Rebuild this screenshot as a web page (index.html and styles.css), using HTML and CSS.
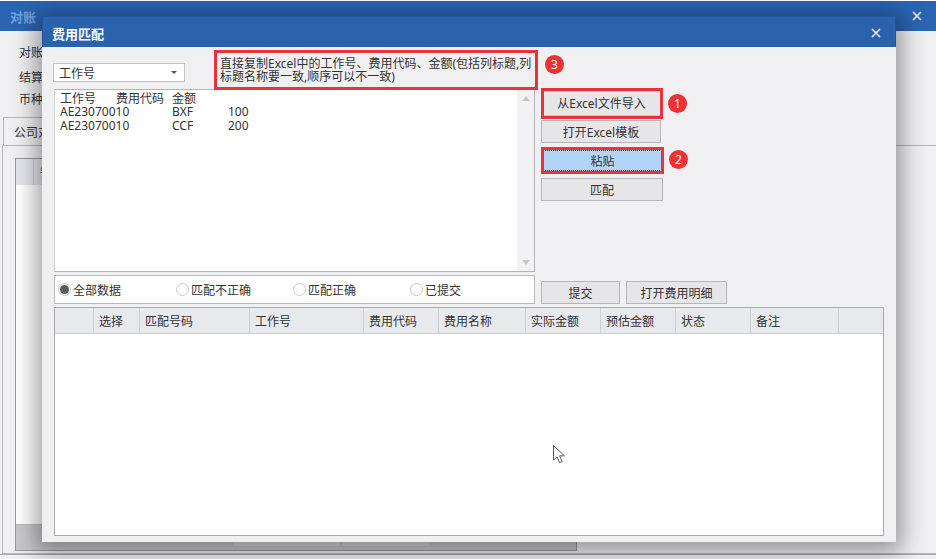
FILE: index.html
```html
<!DOCTYPE html>
<html lang="zh-CN">
<head>
<meta charset="utf-8">
<title>费用匹配</title>
<link rel="stylesheet" href="styles.css">
</head>
<body>
<div class="desk">
  <section class="outer">
    <header class="outer-title"><span>对账</span><svg class="x" viewBox="0 0 10 10"><path d="M1 1L9 9M9 1L1 9"/></svg></header>
    <div class="outer-body">
      <div class="outer-labels"><span>对账</span><span>结算</span><span>币种</span></div>
      <div class="outer-tab">公司对账</div>
      <div class="outer-panel">
        <div class="outer-grid"><div class="outer-grid-head"><i></i><i>销</i></div><div class="outer-grid-foot"><b></b><b></b></div></div>
      </div>
    </div>
  </section>

  <section class="dialog">
    <header class="dialog-title"><span>费用匹配</span><svg class="x" viewBox="0 0 10 10"><path d="M1 1L9 9M9 1L1 9"/></svg></header>
    <div class="dialog-body">
      <div class="top">
        <div class="left">
          <div class="combo"><span>工作号</span><i class="caret"></i></div>
          <div class="memo">
            <div class="memo-text">
              <span class="mh">工作号</span><span class="mh">费用代码</span><span class="mh">金额</span><span class="mh"></span>
              <span class="wide">AE23070010</span><span>BXF</span><span>100</span>
              <span class="wide">AE23070010</span><span>CCF</span><span>200</span>
            </div>
            <div class="scroll"><i class="up"></i><i class="down"></i></div>
          </div>
          <div class="radios">
            <label class="radio on"><i></i>全部数据</label>
            <label class="radio r2"><i></i>匹配不正确</label>
            <label class="radio r3"><i></i>匹配正确</label>
            <label class="radio r4"><i></i>已提交</label>
          </div>
        </div>
        <div class="right">
          <button class="btn b1">从Excel文件导入</button>
          <button class="btn b2">打开Excel模板</button>
          <button class="btn b3">粘贴</button>
          <button class="btn b4">匹配</button>
          <div class="actions">
            <button class="btn b5">提交</button>
            <button class="btn b6">打开费用明细</button>
          </div>
        </div>
      </div>
      <div class="table">
        <div class="thead">
          <span class="c0"></span><span class="c1">选择</span><span class="c2">匹配号码</span><span class="c3">工作号</span><span class="c4">费用代码</span><span class="c5">费用名称</span><span class="c6">实际金额</span><span class="c7">预估金额</span><span class="c8">状态</span><span class="c9">备注</span><span class="c10"></span>
        </div>
      </div>
    </div>
    <div class="note">直接复制Excel中的工作号、费用代码、金额(包括列标题,列标题名称要一致,顺序可以不一致)</div>
    <div class="mark m1"></div>
    <div class="mark m2"></div>
    <span class="badge n3">3</span>
    <span class="badge n1">1</span>
    <span class="badge n2">2</span>
    <svg class="cursor" viewBox="0 0 14 20"><path d="M1.5 1.5V16L5 12.8L7.6 18.6L10.2 17.4L7.6 11.8H12.4Z"/></svg>
  </section>
</div>
</body>
</html>
```
FILE: styles.css
```css
* { box-sizing: border-box; }
html, body { margin: 0; padding: 0; }
body { width: 936px; height: 559px; overflow: hidden; font: 12px/14px "Noto Sans", "Noto Sans CJK SC", sans-serif; color: #333; }
button { font: inherit; color: inherit; padding: 0; }
.desk { position: relative; width: 936px; height: 559px; background: #fff; overflow: hidden; }
.x { width: 10px; height: 10px; fill: none; stroke: #e6eefa; stroke-width: 1.7; }

.outer { position: absolute; left: 0; top: 1px; width: 936px; height: 558px; background: #f0eff2; display: flex; flex-direction: column; }
.outer-title { height: 30px; flex: none; background: #2b65b2; display: flex; justify-content: space-between; align-items: center; padding: 2px 14px 0 10px; color: #6aa4e8; font-weight: 700; font-size: 13px; }
.outer-title .x { margin-top: -3px; }
.outer-body { flex: 1; position: relative; border-bottom: 1px solid #a9a9a9; margin-bottom: 4px; }
.outer-labels { display: flex; flex-direction: column; padding: 15px 0 0 19px; }
.outer-labels span + span { margin-top: 11px; }
.outer-labels span + span + span { margin-top: 8px; }
.outer-tab { position: absolute; left: 3px; top: 86px; width: 60px; height: 28px; border: 1px solid #b5b5b5; border-bottom: 0; padding: 8px 0 0 10px; white-space: nowrap; overflow: hidden; }
.outer-panel { position: absolute; left: 2px; top: 114px; right: 0; bottom: 0; border: 1px solid #b5b5b5; border-right: 0; }
.outer-grid { position: absolute; left: 12px; top: 12px; width: 562px; height: 393px; border: 1px solid #999; background: #fff; display: flex; flex-direction: column; justify-content: space-between; }
.outer-grid-head { height: 26px; background: #e6e7eb; display: flex; }
.outer-grid-head i { width: 18px; border-right: 1px solid #ccc; font-style: normal; padding: 7px 0 0 6px; white-space: nowrap; }
.outer-grid-foot { height: 26px; background: #c9c9cb; border-top: 1px solid #bbb; display: flex; padding-left: 217px; gap: 2px; }
.outer-grid-foot b { width: 107px; background: #d8d8d8; height: 5px; margin-top: 16px; }
.outer-grid-foot b + b { width: 87px; }

.dialog { position: absolute; left: 42px; top: 16px; width: 854px; height: 526px; background: #f0eff2; box-shadow: 0 4px 22px 6px rgba(0, 0, 0, .38); display: flex; flex-direction: column; }
.dialog-title { height: 31px; flex: none; background: #2a62ae; color: #fff; font-weight: 700; font-size: 13px; display: flex; justify-content: space-between; align-items: center; padding: 3px 14px 0 9px; border: 1px solid #24569c; border-bottom: 0; }
.dialog-title .x { margin-top: -1px; }
.dialog-body { flex: 1; padding: 16px 12px 6px; display: flex; flex-direction: column; }
.top { display: flex; gap: 6px; }
.left { width: 481px; display: flex; flex-direction: column; }
.combo { width: 132px; height: 19px; margin-left: -1px; background: #fff; border: 1px solid #c4c4c4; display: flex; justify-content: space-between; align-items: center; padding: 2px 7px 0 5px; }
.caret { width: 0; height: 0; border: 3px solid transparent; border-top-color: #555; border-bottom: 0; margin-top: -2px; }
.memo { margin-top: 7px; height: 183px; background: #fff; border: 1px solid #b4b4b4; border-left-color: #ccc; display: flex; justify-content: space-between; }
.memo-text { padding: 1px 0 0 5px; display: grid; grid-template-columns: repeat(4, 56px); grid-auto-rows: 14px; align-content: start; white-space: nowrap; }
.memo-text .mh { padding-top: 1px; }
.memo-text .wide { grid-column: span 2; }
.scroll { width: 17px; background: #f2f2f4; display: flex; flex-direction: column; justify-content: space-between; align-items: center; padding: 6px 0; }
.up, .down { width: 0; height: 0; border: 4px solid transparent; }
.up { border-top: 0; border-bottom: 5px solid #c6c6c6; }
.down { border-bottom: 0; border-top: 5px solid #c6c6c6; }
.radios { margin-top: 3px; height: 29px; background: #fff; border: 1px solid #b9b9b9; display: flex; align-items: center; padding: 2px 0 0 3px; }
.radio { display: flex; align-items: center; gap: 2px; white-space: nowrap; line-height: 16px; }
.radio i { width: 13px; height: 13px; border-radius: 50%; border: 1px solid #c9c9c9; background: #fff; display: flex; align-items: center; justify-content: center; margin-top: -2px; }
.radio.on i::after { content: ""; width: 9px; height: 9px; border-radius: 50%; background: #5c5c60; }
.r2 { margin-left: 55px; }
.r3 { margin-left: 42px; }
.r4 { margin-left: 54px; }

.right { flex: 1; display: flex; flex-direction: column; align-items: flex-start; padding-top: 28px; }
.btn { background: #e6e6e9; border: 1px solid #b6b6b8; height: 23px; display: block; text-align: center; padding-top: 2px; }
.b1 { width: 121px; height: 25px; border-color: #c8c8c8; padding-top: 0; }
.b2 { width: 120px; margin-top: 4px; }
.b3 { width: 119px; height: 21px; margin: 7px 0 0 2px; background: #b1d4f7; border: 1px dotted #223; }
.b4 { width: 122px; margin-top: 7px; }
.actions { margin-top: 80px; display: flex; gap: 6px; }
.b5 { width: 79px; }
.b6 { width: 101px; }

.table { margin-top: 3px; width: 830px; height: 229px; background: #fff; border: 1px solid #aaa; }
.thead { height: 26px; background: #e8e9ed; border-bottom: 1px solid #ccc; display: grid; grid-template-columns: 39px 46px 110px 114px 75px 87px 75px 75px 75px 88px 1fr; align-items: stretch; }
.thead span { border-right: 1px solid #cfcfd3; padding: 7px 0 0 5px; white-space: nowrap; }
.thead .c10 { border-right: 0; }

.note { position: absolute; left: 172px; top: 34px; width: 324px; height: 40px; border: 3px solid #e8333c; padding: 4px 0 0 3px; line-height: 13px; word-break: break-all; background: #f0eff2; color: #333; }
.mark { position: absolute; border: 3px solid #e8333c; }
.m1 { left: 499px; top: 72px; width: 122px; height: 31px; }
.m2 { left: 499px; top: 131px; width: 123px; height: 27px; }
.badge { position: absolute; width: 19px; height: 19px; border-radius: 50%; background: #ee3233; color: #fff; font-size: 12px; line-height: 19px; text-align: center; }
.n3 { left: 503px; top: 39px; }
.n1 { left: 626px; top: 78px; }
.n2 { left: 627px; top: 134px; }
.cursor { position: absolute; left: 510px; top: 428px; width: 14px; height: 20px; fill: #fff; stroke: #555; stroke-width: 1; }
```
